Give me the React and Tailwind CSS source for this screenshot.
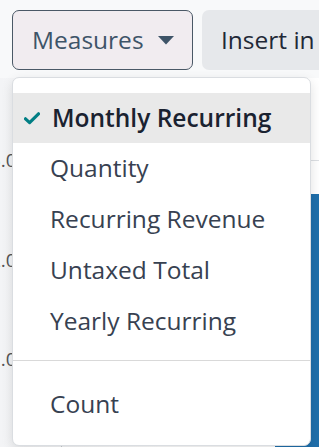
import React from "react";

const items = ["Quantity", "Recurring Revenue", "Untaxed Total", "Yearly Recurring"];
const ticks = ["3.0", "2.0", "1.0"];

const Check = () => (
  <svg width="16" height="13" viewBox="0 0 16 13" className="shrink-0">
    <path d="M1.5 6.8 L5.6 10.6 L14.5 1.8" fill="none" stroke="#017e84" strokeWidth="3.2" strokeLinecap="round" strokeLinejoin="round" />
  </svg>
);

const App = () => {
  return (
    <div className="relative w-[319px] h-[447px] overflow-hidden bg-[#f8f9fa] font-['Open_Sans',sans-serif]">
      {/* Toolbar */}
      <div className="flex gap-[9px] pl-3 pt-[10px]">
        <button className="flex items-center gap-[14px] h-[60px] w-[181px] shrink-0 rounded-[7px] border border-[#4a5866] bg-[#f1ecf0] pl-[19px] text-[24.5px] font-medium text-[#3e5468]">
          Measures
          <svg width="16" height="9" viewBox="0 0 16 9">
            <path d="M0 0 H16 L8 8.5 Z" fill="#3e5468" />
          </svg>
        </button>
        <button className="flex items-center h-[60px] w-[140px] shrink-0 rounded-l-[7px] bg-[#e6e8eb] pl-[19px] text-[24.5px] font-medium text-[#1f2937] whitespace-nowrap overflow-hidden">
          Insert in Spreadsheet
        </button>
      </div>

      {/* Chart behind */}
      <div className="relative mt-2 flex h-[369px] bg-gradient-to-r from-[#f3f4f6] via-white to-white">
        <div className="flex w-[62px] shrink-0 flex-col border-r border-[#c8ccd0] pt-[70px]">
          {ticks.map((t) => (
            <div key={t} className="h-[103px] -ml-[10px] text-[19px] leading-[24px] text-[#555]">
              {t}
            </div>
          ))}
        </div>
        <div className="flex flex-1 flex-col pt-[82px]">
          <div className="flex flex-1 flex-col border-t border-[#dcdfe3]">
            <div className="h-[102px] border-b border-[#dcdfe3]" />
            <div className="h-[103px] border-b border-[#dcdfe3]" />
            <div className="flex flex-1 justify-end">
              <div className="-mt-[172px] w-[44px] bg-[#1f6fab]" />
            </div>
          </div>
        </div>
      </div>

      {/* Dropdown menu */}
      <div className="absolute left-[12px] top-[77px] w-[299px] rounded-[7px] border border-[#dadde1] bg-white py-[15px] shadow-[0_4px_12px_rgba(0,0,0,0.12)]">
        <div className="flex items-center h-[50px] bg-[#e9e9e9] pl-[11px] text-[24.5px] font-semibold text-[#1a2230]">
          <Check />
          <span className="ml-[12px] whitespace-nowrap">Monthly Recurring</span>
        </div>
        {items.map((label) => (
          <div key={label} className="flex items-center h-[51px] pl-[37px] text-[24.5px] text-[#374151] whitespace-nowrap">
            {label}
          </div>
        ))}
        <div className="mt-[13px] mb-[18px] h-px bg-[#d9d9d9]" />
        <div className="flex items-center h-[51px] pl-[37px] text-[24.5px] text-[#374151]">Count</div>
      </div>
    </div>
  );
};

export default App;
